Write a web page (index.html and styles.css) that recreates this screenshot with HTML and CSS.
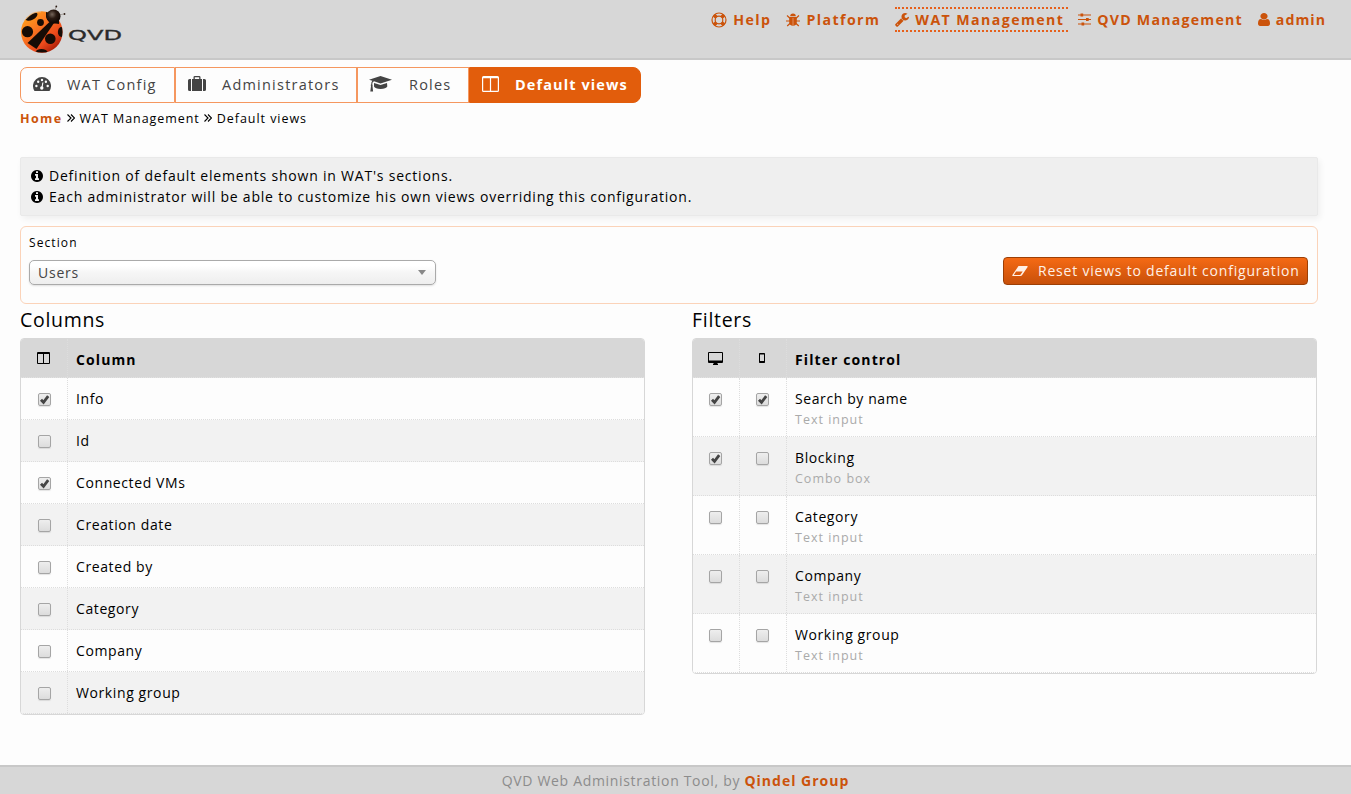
FILE: index.html
```html
<!DOCTYPE html>
<html lang="en">
<head>
<meta charset="utf-8">
<title>QVD Web Administration Tool</title>
<link rel="stylesheet" href="styles.css">
</head>
<body>
<svg width="0" height="0" class="defs">
  <defs>
    <linearGradient id="shell" x1="0.1" y1="0.1" x2="0.8" y2="0.9"><stop offset="0" stop-color="#ffa01a"/><stop offset=".35" stop-color="#fb7a20"/><stop offset=".75" stop-color="#ec4a1c"/><stop offset="1" stop-color="#b02008"/></linearGradient>
    <radialGradient id="head" cx=".4" cy=".35" r=".6"><stop offset="0" stop-color="#75655a"/><stop offset=".5" stop-color="#2a1a12"/><stop offset="1" stop-color="#120804"/></radialGradient>
    <clipPath id="body"><circle cx="22" cy="27" r="20.500"/></clipPath>
  </defs>
  <symbol id="columns" viewBox="0 0 17 16"><path fill-rule="evenodd" d="M1.500 0h14A1.500 1.500 0 0 1 17 1.500v13a1.500 1.500 0 0 1-1.500 1.500h-14A1.500 1.500 0 0 1 0 14.500v-13A1.500 1.500 0 0 1 1.500 0zM1.200 2.300v12.400h6.700V2.300zM9.100 2.300v12.400h6.700V2.300z"/></symbol>
  <symbol id="info" viewBox="128 128 1536 1536"><path d="M1152 1376v-160q0-14-9-23t-23-9h-96v-512q0-14-9-23t-23-9h-320q-14 0-23 9t-9 23v160q0 14 9 23t23 9h96v320h-96q-14 0-23 9t-9 23v160q0 14 9 23t23 9h448q14 0 23-9t9-23zm-128-896v-160q0-14-9-23t-23-9h-192q-14 0-23 9t-9 23v160q0 14 9 23t23 9h192q14 0 23-9t9-23zm640 416q0 209-103 385.500t-279.500 279.500-385.500 103-385.500-103-279.500-279.500-103-385.500 103-385.500 279.500-279.500 385.500-103 385.500 103 279.500 279.500 103 385.500z"/></symbol>
  <symbol id="chevrons" viewBox="0 0 8 8"><path d="M.5.5L4 4 .500 7.500M4 .500L7.500 4 4 7.500" fill="none" stroke="currentColor" stroke-width="1.100"/></symbol>
  <symbol id="tick" viewBox="0 0 13 13"><path d="M3 6.800l2.500 2.600 4.700-6.200" fill="none" stroke="#444" stroke-width="2.800"/></symbol>
</svg>

<header class="header">
  <svg class="logo" width="102" height="50" viewBox="0 0 102 50">
    <path d="M34 8L36 2M39 10l5-1" stroke="#8a8078" stroke-width=".6"/>
    <circle cx="36.300" cy="1.500" r=".9" fill="#2a1a12"/><circle cx="44.500" cy="9" r=".9" fill="#2a1a12"/>
    <circle cx="21.800" cy="27" r="20.800" fill="url(#shell)"/>
    <g clip-path="url(#body)" fill="#160c06">
      <path d="M30 16.500L7.500 38l9 6L34 18z"/>
      <ellipse cx="11.500" cy="11.500" rx="6.500" ry="3.300" transform="rotate(-28 11.500 11.500)"/>
      <circle cx="20.500" cy="17.500" r="3.400"/>
      <circle cx="7.500" cy="26.700" r="5.600"/>
      <circle cx="30.300" cy="33.700" r="5.300"/>
      <ellipse cx="41.500" cy="27" rx="3.600" ry="5"/>
      <ellipse cx="21.500" cy="47" rx="6" ry="3"/>
      <path d="M26 12q1 6 13 7V6H26z"/>
    </g>
    <path d="M6 14q6-8 15-7" stroke="#e8c098" stroke-width="1.200" fill="none" opacity=".6"/>
    <circle cx="33.500" cy="11.500" r="7" fill="url(#head)"/>
    <text class="wordmark" x="48" y="35.200" textLength="54" lengthAdjust="spacingAndGlyphs">QVD</text>
  </svg>
  <nav class="menu">
    <a><svg width="16" height="16" viewBox="0 0 16 16"><g fill="none" stroke="currentColor"><circle cx="8" cy="8" r="7" stroke-width="1.200"/><circle cx="8" cy="8" r="3.800" stroke-width="1.200"/><path d="M3 3l2.500 2.500M13 3l-2.500 2.500M3 13l2.500-2.500M13 13l-2.500-2.500" stroke-width="3.600"/></g></svg>Help</a>
    <a><svg width="14" height="14" viewBox="0 0 14 14"><path d="M4.200 3.300a2.800 2.800 0 0 1 5.600 0zM3.200 4h7.600v5a3.800 3.800 0 0 1-7.600 0z"/><path d="M1 2.500L4 5.300M13 2.500L10 5.300M0 8h14M1.200 13L4.500 10M12.800 13L9.500 10" fill="none" stroke="currentColor" stroke-width="1.200"/><path d="M7 5v7.500" stroke="#e6a077" stroke-width=".8"/></svg>Platform</a>
    <a class="active"><svg width="14" height="14" viewBox="0 128 1664 1664"><path d="M384 1472q0-26-19-45t-45-19-45 19-19 45 19 45 45 19 45-19 19-45zm644-420l-682 682q-37 37-90 37-52 0-91-37l-106-108q-38-36-38-90 0-53 38-91l681-681q39 98 114.500 173.500t173.500 114.500zm634-435q0 39-23 106-47 134-164.500 217.500t-258.500 83.500q-185 0-316.500-131.500t-131.500-316.500 131.500-316.500 316.500-131.500q58 0 121.500 16.500t107.500 46.500q16 11 16 28t-16 28l-293 169v224l193 107q5-3 79-48.500t135.500-81 70.500-35.500q15 0 23.500 10t8.500 25z"/></svg>WAT Management</a>
    <a class="qvd"><svg width="13" height="13" viewBox="0 0 13 13"><path d="M0 1.500h13v1H0zM0 6h13v1H0zM0 10.500h13v1H0zM2.500.500h2.700v3H2.500zM8 5h2.700v3H8zM3.500 9.500h2.700v3H3.500z"/></svg>QVD Management</a>
    <a class="user"><svg width="12" height="13" viewBox="0 128 1280 1536" preserveAspectRatio="none"><path d="M1280 1399q0 109-62.500 187t-150.500 78h-854q-88 0-150.500-78t-62.500-187q0-85 8.500-160.500t31.500-152 58.500-131 94-89 134.500-34.500q131 128 313 128t313-128q76 0 134.500 34.500t94 89 58.500 131 31.500 152 8.500 160.500zm-256-887q0 159-112.500 271.500t-271.500 112.500-271.500-112.500-112.500-271.500 112.500-271.500 271.500-112.500 271.500 112.500 112.500 271.500z"/></svg>admin</a>
  </nav>
</header>

<main class="main">
  <nav class="tabs">
    <a class="tab config"><svg width="18" height="14" viewBox="0 0 18 14"><path fill-rule="evenodd" d="M1.500 14A9 9 0 1 1 16.500 14zM2.200 9a1.200 1.200 0 1 0 2.400 0 1.200 1.200 0 1 0-2.400 0M4 4.800a1.200 1.200 0 1 0 2.400 0 1.200 1.200 0 1 0-2.400 0M7.800 3a1.200 1.200 0 1 0 2.400 0 1.200 1.200 0 1 0-2.400 0M11.700 4.800a1.200 1.200 0 1 0 2.400 0 1.200 1.200 0 1 0-2.400 0M13.500 9a1.200 1.200 0 1 0 2.400 0 1.200 1.200 0 1 0-2.400 0"/><path d="M9.900 5.500L8.900 11" stroke="#fff" stroke-width="1.100"/><circle cx="8.800" cy="11" r="1.700" fill="#fff"/></svg>WAT Config</a>
    <a class="tab admins"><svg width="18" height="15" viewBox="0 0 18 15"><path fill-rule="evenodd" d="M4 3h1.500V1.300Q5.500 0 6.800 0h4.400q1.300 0 1.300 1.300V3H14v12H4zM6.800 1.300V3h4.400V1.300zM0 4.500Q0 3 1.500 3H3v12H1.500Q0 15 0 13.500zM15 3h1.500Q18 3 18 4.500v9q0 1.500-1.500 1.500H15z"/></svg>Administrators</a>
    <a class="tab roles"><svg width="23" height="16" viewBox="0 0 23 16"><path d="M11.500 0L23 3.700 11.500 7.500 5 5.300q-1.700.500-1.800 3Q4 9 3.500 10l.600 5.500H1.300L2 10q-.700-1 .200-1.700Q2.200 6 3.300 4.800L0 3.700zM5 7l6.500 2L18 7l.300 3.500Q17 12.800 11.600 13 6.200 12.800 5 10.500z"/></svg>Roles</a>
    <a class="tab views"><svg width="17" height="16"><use href="#columns"/></svg>Default views</a>
  </nav>

  <div class="breadcrumb"><b>Home</b><svg width="8" height="8"><use href="#chevrons"/></svg><span>WAT Management</span><svg width="8" height="8"><use href="#chevrons"/></svg><span>Default views</span></div>

  <section class="notice">
    <p><svg width="12" height="12"><use href="#info"/></svg>Definition of default elements shown in WAT's sections.</p>
    <p><svg width="12" height="12"><use href="#info"/></svg>Each administrator will be able to customize his own views overriding this configuration.</p>
  </section>

  <section class="section-box">
    <div class="field">
      <label>Section</label>
      <div class="select"><span>Users</span><i></i></div>
    </div>
    <button class="reset"><svg width="16" height="10" viewBox="0 0 16 10"><path fill-rule="evenodd" d="M6.500 0H15q1 0 .600 1L10 9.200Q9.500 10 8.500 10H1Q0 10 .400 9zM4 5.400L1.900 9h6.300l2.500-3.600z"/></svg>Reset views to default configuration</button>
  </section>

  <div class="panels">
    <section>
      <h2>Columns</h2>
      <div class="table one">
        <div class="row head"><div class="cell"><svg width="13" height="12" viewBox="0 0 13 12"><path fill-rule="evenodd" d="M1 0h11q1 0 1 1v10q0 1-1 1H1q-1 0-1-1V1Q0 0 1 0zM1 2v9h5V2zM7 2v9h5V2z"/></svg></div><div class="name">Column</div></div>
        <div class="row"><div class="cell"><i class="box"><svg><use href="#tick"/></svg></i></div><div class="name">Info</div></div>
        <div class="row"><div class="cell"><i class="box"></i></div><div class="name">Id</div></div>
        <div class="row"><div class="cell"><i class="box"><svg><use href="#tick"/></svg></i></div><div class="name">Connected VMs</div></div>
        <div class="row"><div class="cell"><i class="box"></i></div><div class="name">Creation date</div></div>
        <div class="row"><div class="cell"><i class="box"></i></div><div class="name">Created by</div></div>
        <div class="row"><div class="cell"><i class="box"></i></div><div class="name">Category</div></div>
        <div class="row"><div class="cell"><i class="box"></i></div><div class="name">Company</div></div>
        <div class="row"><div class="cell"><i class="box"></i></div><div class="name">Working group</div></div>
      </div>
    </section>
    <section>
      <h2>Filters</h2>
      <div class="table two">
        <div class="row head"><div class="cell"><svg width="15" height="13" viewBox="0 0 15 13"><path fill-rule="evenodd" d="M1 0h13q1 0 1 1v9q0 1-1 1H9.500v1h.500v1H5v-1h.500v-1H1q-1 0-1-1V1Q0 0 1 0zM1 1v7.500h13V1z"/></svg></div><div class="cell"><svg width="6" height="10" viewBox="0 0 6 10"><path fill-rule="evenodd" d="M.700 0h4.600Q6 0 6 .700v8.600q0 .700-.700.700H.700Q0 10 0 9.300V.700Q0 0 .700 0zM1 1.500V8h4V1.500z"/></svg></div><div class="name">Filter control</div></div>
        <div class="row"><div class="cell"><i class="box"><svg><use href="#tick"/></svg></i></div><div class="cell"><i class="box"><svg><use href="#tick"/></svg></i></div><div class="name">Search by name<small>Text input</small></div></div>
        <div class="row"><div class="cell"><i class="box"><svg><use href="#tick"/></svg></i></div><div class="cell"><i class="box"></i></div><div class="name">Blocking<small>Combo box</small></div></div>
        <div class="row"><div class="cell"><i class="box"></i></div><div class="cell"><i class="box"></i></div><div class="name">Category<small>Text input</small></div></div>
        <div class="row"><div class="cell"><i class="box"></i></div><div class="cell"><i class="box"></i></div><div class="name">Company<small>Text input</small></div></div>
        <div class="row"><div class="cell"><i class="box"></i></div><div class="cell"><i class="box"></i></div><div class="name">Working group<small>Text input</small></div></div>
      </div>
    </section>
  </div>
</main>

<footer class="footer">QVD Web Administration Tool, by <b>Qindel Group</b></footer>
</body>
</html>
```
FILE: styles.css
```css
* { box-sizing: border-box; }
html, body { height: 100%; }
body {
  margin: 0;
  background: #fdfdfd;
  color: #000;
  font: 14px/21px "Open Sans", "Noto Sans", sans-serif;
  letter-spacing: .79px;
  display: flex;
  flex-direction: column;
  overflow: hidden;
}
svg { display: block; flex: none; fill: currentColor; }
.defs { position: absolute; }

.header {
  height: 60px;
  flex: none;
  display: flex;
  justify-content: space-between;
  align-items: flex-start;
  padding: 5px 25px 0 20px;
  background: #d7d7d7;
  border-bottom: 2px solid #c8c8c8;
}
.wordmark { font: 14px "DejaVu Sans", sans-serif; letter-spacing: 0; fill: #2a2a2a; stroke: #2a2a2a; stroke-width: .3px; }
.menu { display: flex; gap: 15px; padding-top: 2px; letter-spacing: 1.400px; }
.menu a {
  display: flex;
  align-items: center;
  gap: 6px;
  height: 25px;
  color: #cb530b;
  font-weight: 700;
  font-size: 14.200px;
  white-space: nowrap;
  border-top: 2px dotted transparent;
  border-bottom: 2px dotted transparent;
}
.menu .active { border-color: #e6601a; padding-right: 4px; margin-right: -5px; }
.menu .qvd { letter-spacing: 1.200px; }
.menu .user { letter-spacing: 1px; }

.main { flex: 1; padding: 7px 33px 0 20px; }
.tabs { display: flex; height: 36px; }
.tab {
  display: flex;
  align-items: center;
  gap: 16px;
  padding: 0 0 2px 12px;
  border: 1px solid #f5975f;
  color: #444;
  font-size: 14.500px;
  letter-spacing: 1.220px;
  white-space: nowrap;
}
.tab svg { margin-top: -1px; }
.config { width: 155px; border-radius: 7px 0 0 7px; }
.admins { width: 182px; }
.roles { width: 112px; }
.roles svg { margin-left: -1px; margin-right: 1px; }
.views { width: 172px; border-color: #e25d0c; border-radius: 0 8px 8px 0; background: #e25d0c; color: #fff; font-weight: 700; letter-spacing: 1.100px; }

.breadcrumb { display: flex; align-items: center; gap: 5px; height: 20px; margin-top: 5px; font-size: 12.500px; letter-spacing: .950px; }
.breadcrumb b { color: #cb530b; letter-spacing: 1.400px; margin-right: -1px; }
.breadcrumb span:not(:last-child) { margin-right: -1px; }

.notice {
  height: 59px;
  margin-top: 29px;
  padding: 7px 10px;
  background: #efefef;
  border: 1px solid #e9e9e9;
  border-radius: 2px;
  box-shadow: 2px 3px 6px rgba(0, 0, 0, .06);
}
.notice p { display: flex; align-items: center; gap: 6px; margin: 0; height: 21px; }

.section-box {
  display: flex;
  justify-content: space-between;
  height: 78px;
  margin-top: 10px;
  padding: 6px 9px 0 8px;
  border: 1px solid #fbd3b9;
  border-radius: 6px;
}
.field label { display: block; height: 27px; line-height: 19px; font-size: 12px; letter-spacing: 1.100px; }
.select {
  display: flex;
  align-items: center;
  justify-content: space-between;
  width: 407px;
  height: 25px;
  padding: 0 9px 0 8px;
  border: 1px solid #aaa;
  border-radius: 5px;
  background: linear-gradient(#fff 20%, #f6f6f6 50%, #eee);
  box-shadow: 0 1px 2px rgba(0, 0, 0, .12);
  color: #444;
}
.select i { border: 4px solid transparent; border-top: 5px solid #888; border-bottom: 0; }
.reset {
  display: flex;
  align-items: center;
  gap: 10px;
  width: 305px;
  height: 28px;
  margin-top: 24px;
  padding: 0 8px 1px;
  border: 1px solid #9c3f06;
  border-radius: 4px;
  background: linear-gradient(#f56a14, #c8500a);
  color: #fff0e6;
  font: inherit;
  letter-spacing: inherit;
  white-space: nowrap;
}

.panels { display: grid; grid-template-columns: 625px 625px; gap: 47px; align-items: start; padding-top: 2px; }
h2 { height: 32px; margin: 0; font-size: 19.500px; line-height: 28px; font-weight: 400; letter-spacing: .7px; }
.table { border: 1px solid #d7d7d7; border-radius: 4px; overflow: hidden; }
.row { display: grid; height: 42px; border-bottom: 1px dotted #ddd; }
.one .row { grid-template-columns: 47px 1fr; }
.two .row { grid-template-columns: 47px 47px 1fr; height: 59px; }
.row:nth-child(odd) { background: #f2f2f2; }
.row:nth-child(even) { background: #fdfdfd; }
.table .head { height: 39px; background: #d7d7d7; font-weight: 700; border-bottom-color: #e2e2e2; }
.cell { display: flex; justify-content: center; padding-top: 15px; border-right: 1px dotted #ddd; }
.two .cell { padding-right: 2px; }
.head .cell { height: 38px; align-items: center; padding: 0 2px 0 0; }
.name { padding: 11px 8px 0; line-height: 20px; letter-spacing: .600px; }
.head .name { letter-spacing: 1.100px; }
small { display: block; font-size: 12.500px; line-height: 21px; color: #aaa; letter-spacing: 1px; }
.box {
  width: 13px;
  height: 13px;
  border: 1px solid #a5a5a5;
  border-radius: 2px;
  background: linear-gradient(#eee, #dcdcdc);
  box-shadow: 0 1px 1px rgba(0, 0, 0, .1);
}
.box svg { width: 13px; height: 13px; margin: -1px; }

.footer {
  height: 29px;
  flex: none;
  padding-top: 3px;
  background: #d7d7d7;
  border-top: 2px solid #c8c8c8;
  color: #8c8c8c;
  letter-spacing: .680px;
  text-align: center;
}
.footer b { color: #cb530b; letter-spacing: 1px; }
```
